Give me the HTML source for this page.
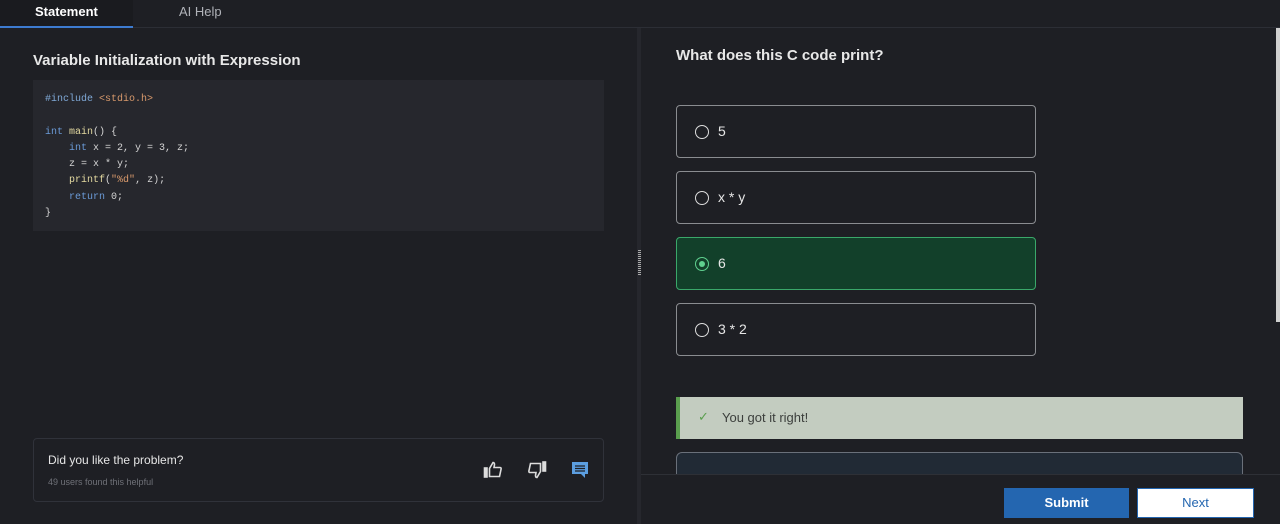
<!DOCTYPE html><html><head><style>
*{margin:0;padding:0;box-sizing:border-box}
body{width:1280px;height:524px;background:#1e1f24;font-family:"Liberation Sans",sans-serif;overflow:hidden;position:relative;color:#e6e6e6}
.abs{position:absolute}
.tabs{left:0;top:0;width:1280px;height:28px;background:#1e1f24;border-bottom:1px solid #2c2e35}
.mono{font-family:"Liberation Mono",monospace;font-size:10px;line-height:16.3px;color:#d4d4d4;white-space:pre}
.opt{left:676px;width:360px;height:53px;border:1px solid #8a8c90;border-radius:4px;font-size:14px;color:#e6e6e6}
.opt .r{position:absolute;left:18px;top:19px;width:14px;height:14px;border:1.5px solid #ddd;border-radius:50%}
.opt span{position:absolute;left:41px;top:17px}
</style></head><body>
<div class="abs tabs"></div>
<div class="abs" style="left:0;top:0;width:133px;height:28px;background:#1a1b1f;border-bottom:2px solid #3d7bd0"></div>
<div class="abs" style="left:35px;top:4px;font-size:13px;font-weight:bold;color:#fff">Statement</div>
<div class="abs" style="left:179px;top:4px;font-size:13px;color:#b0b2b8">AI Help</div>
<div class="abs" style="left:33px;top:52px;font-size:15px;font-weight:bold;color:#e8e8e8">Variable Initialization with Expression</div>
<div class="abs" style="left:33px;top:80px;width:571px;height:151px;background:#26272d"></div>
<div class="abs mono" style="left:45px;top:92px"><span style="color:#7fa8d6">#include</span> <span style="color:#d99a6c">&lt;stdio.h&gt;</span>

<span style="color:#6b9bd8">int</span> <span style="color:#e3d9a0">main</span>() {
    <span style="color:#6b9bd8">int</span> x = 2, y = 3, z;
    z = x * y;
    <span style="color:#e3d9a0">printf</span>(<span style="color:#d99a6c">"%d"</span>, z);
    <span style="color:#6b9bd8">return</span> 0;
}</div>
<div class="abs" style="left:33px;top:438px;width:571px;height:64px;border:1px solid #30323a;border-radius:4px"></div>
<div class="abs" style="left:48px;top:453px;font-size:12px;color:#e6e6e6">Did you like the problem?</div>
<div class="abs" style="left:48px;top:477px;font-size:9px;color:#6f7178">49 users found this helpful</div>
<svg class="abs" style="left:483px;top:460px" width="20" height="20" viewBox="0 0 20 20" fill="none" stroke="#ddd" stroke-width="1.6"><rect x="1.5" y="8" width="2.5" height="9" fill="#ddd"/><path d="M6.5 8.5 L10 2.5 Q11.5 2.5 11.5 4.5 L11 7.5 H17 Q18.5 7.5 18 9.5 L16.5 16.5 H6.5Z"/></svg>
<svg class="abs" style="left:527px;top:460px" width="20" height="20" viewBox="0 0 20 20" fill="none" stroke="#ddd" stroke-width="1.6"><rect x="16" y="2" width="2.5" height="9" fill="#ddd"/><path d="M13.5 11.5 L10 17.5 Q8.5 17.5 8.5 15.5 L9 12.5 H3 Q1.5 12.5 2 10.5 L3.5 3.5 H13.5Z"/></svg>
<svg class="abs" style="left:571px;top:461px" width="18" height="18" viewBox="0 0 18 18"><path d="M1 1H17V13H14V17L10 13H1Z" fill="#5c9ee0"/><path d="M4 5H14M4 7.5H14M4 10H14" stroke="#1e1f24" stroke-width="1.2"/></svg>
<div class="abs" style="left:637px;top:28px;width:4px;height:496px;background:#26272d"></div>
<div class="abs" style="left:638px;top:250px;width:3px;height:26px;background:repeating-linear-gradient(#aaa 0 1px,transparent 1px 2px)"></div>
<div class="abs" style="left:1276px;top:28px;width:4px;height:294px;background:#d0d0d0"></div>
<div class="abs" style="left:676px;top:47px;font-size:15px;font-weight:bold;color:#e8e8e8">What does this C code print?</div>
<div class="abs opt" style="top:105px"><div class="r"></div><span>5</span></div>
<div class="abs opt" style="top:171px"><div class="r"></div><span>x * y</span></div>
<div class="abs opt" style="top:237px;background:#12402a;border-color:#3aa86a"><div class="r" style="border-color:#5fd08f"><div style="position:absolute;left:2.5px;top:2.5px;width:6px;height:6px;border-radius:50%;background:#5fd08f"></div></div><span>6</span></div>
<div class="abs opt" style="top:303px"><div class="r"></div><span>3 * 2</span></div>
<div class="abs" style="left:676px;top:397px;width:567px;height:42px;background:#c3ccc0;border-left:4px solid #5a9e4e"></div>
<div class="abs" style="left:698px;top:409px;font-size:13px;color:#5a9e4e">✓</div>
<div class="abs" style="left:722px;top:410px;font-size:13px;color:#3c3f3c">You got it right!</div>
<div class="abs" style="left:676px;top:452px;width:567px;height:40px;background:#212a35;border:1px solid #6a707a;border-radius:6px"></div>
<div class="abs" style="left:641px;top:474px;width:639px;height:50px;background:#1e1f24;border-top:1px solid #2e3036"></div>
<div class="abs" style="left:1004px;top:488px;width:125px;height:30px;background:#2466b0;color:#fff;font-size:13px;font-weight:bold;text-align:center;line-height:30px">Submit</div>
<div class="abs" style="left:1137px;top:488px;width:117px;height:30px;background:#fff;border:1px solid #2466b0;color:#2466b0;font-size:13px;text-align:center;line-height:28px">Next</div>
</body></html>
